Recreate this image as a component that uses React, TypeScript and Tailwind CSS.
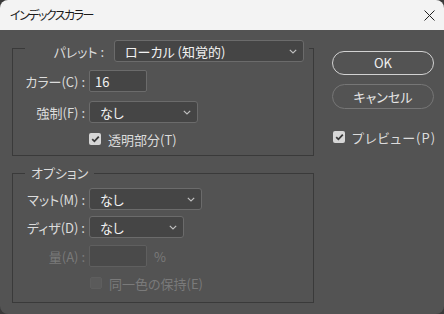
import React from 'react';

const font = "font-['Noto_Sans_CJK_JP','Noto_Sans',sans-serif] [font-feature-settings:'palt']";

function Chevron() {
  return (
    <svg width="8" height="5" viewBox="0 0 8 5" className="shrink-0">
      <path d="M0.8 0.8 L4 4 L7.2 0.8" fill="none" stroke="#bdbdbd" strokeWidth="1.2" />
    </svg>
  );
}

function Select({ value, w }: { value: string; w: string }) {
  return (
    <div className={`${w} h-[22px] flex items-center justify-between pl-[10px] pr-[6px] bg-[#454545] border border-[#6b6b6b] rounded-[3px] text-[13px] text-[#f2f2f2]`}>
      <span className="leading-none">{value}</span>
      <Chevron />
    </div>
  );
}

function Check({ on, disabled }: { on?: boolean; disabled?: boolean }) {
  return (
    <div className={`w-[12px] h-[12px] shrink-0 rounded-[2px] flex items-center justify-center ${disabled ? 'bg-[#5a5a5a] border border-[#5e5e5e]' : 'bg-[#d6d6d6]'}`}>
      {on && (
        <svg width="9" height="8" viewBox="0 0 9 8">
          <path d="M1.2 4.2 L3.4 6.3 L7.8 1.6" fill="none" stroke="#3a3a3a" strokeWidth="1.8" />
        </svg>
      )}
    </div>
  );
}

function Label({ text, dim }: { text: string; dim?: boolean }) {
  return (
    <span className={`w-[72px] text-right text-[13px] leading-none ${dim ? 'text-[#7a7a7a]' : 'text-[#dcdcdc]'}`}>{text}</span>
  );
}

export default function App() {
  return (
    <div className={`w-[444px] h-[314px] bg-[#3a3a3a] ${font}`}>
      <div className="w-full h-full rounded-[8px] overflow-hidden flex flex-col">
        <div className="h-[30px] bg-[#f3f3f3] flex items-center justify-between pl-[10px] pr-[9px] shrink-0">
          <span className="text-[12px] tracking-[-1.5px] text-[#1b1b1b]">インデックスカラー</span>
          <svg width="11" height="11" viewBox="0 0 11 11">
            <path d="M0.5 0.5 L10.5 10.5 M10.5 0.5 L0.5 10.5" stroke="#222" strokeWidth="1" />
          </svg>
        </div>
        <div className="flex-1 bg-[#535353] flex pt-[4px] pl-[12px]">
          <div className="w-[302px] flex flex-col">
            <fieldset className="border border-[#3a3a3a] pb-[8px]">
              <legend className="ml-[12px] pt-[6px] pr-[5px]">
                <div className="flex items-center">
                  <span className="w-[79px] text-right text-[13px] leading-none text-[#dcdcdc]">パレット :</span>
                  <div className="ml-[10px]"><Select value="ローカル (知覚的)" w="w-[190px]" /></div>
                </div>
              </legend>
              <div className="flex items-center mt-[8px]">
                <Label text="カラー(C) :" />
                <div className="ml-[4px] w-[58px] h-[22px] bg-[#454545] border border-[#6b6b6b] rounded-[2px] flex items-center pl-[5px] text-[13px] text-[#f2f2f2] leading-none">16</div>
              </div>
              <div className="flex items-center mt-[9px]">
                <Label text="強制(F) :" />
                <div className="ml-[4px]"><Select value="なし" w="w-[109px]" /></div>
              </div>
              <div className="flex items-center mt-[8px] h-[16px] pl-[76px]">
                <Check on />
                <span className="ml-[7px] text-[13px] leading-none text-[#dcdcdc]">透明部分(T)</span>
              </div>
            </fieldset>
            <fieldset className="border border-[#3a3a3a] mt-[9px] pb-[11px]">
              <legend className="ml-[12px] px-[6px] text-[13px] leading-[16px] text-[#dcdcdc]">オプション</legend>
              <div className="flex items-center mt-[7px]">
                <Label text="マット(M) :" />
                <div className="ml-[4px]"><Select value="なし" w="w-[113px]" /></div>
              </div>
              <div className="flex items-center mt-[6px]">
                <Label text="ディザ(D) :" />
                <div className="ml-[4px]"><Select value="なし" w="w-[95px]" /></div>
              </div>
              <div className="flex items-center mt-[7px]">
                <Label text="量(A) :" dim />
                <div className="ml-[4px] w-[58px] h-[22px] bg-[#4a4a4a] border border-[#5f5f5f] rounded-[2px]" />
                <span className="ml-[7px] text-[13px] leading-none text-[#7a7a7a]">%</span>
              </div>
              <div className="flex items-center mt-[8px] h-[16px] pl-[77px]">
                <Check disabled />
                <span className="ml-[7px] text-[13px] leading-none text-[#7a7a7a]">同一色の保持(E)</span>
              </div>
            </fieldset>
          </div>
          <div className="ml-[18px] w-[102px] flex flex-col pt-[17px]">
            <div className="h-[24px] rounded-full border-[1.5px] border-[#d2d2d2] flex items-center justify-center text-[13px] text-[#f0f0f0]">OK</div>
            <div className="mt-[9px] h-[25px] rounded-full border border-[#767676] flex items-center justify-center text-[13px] text-[#e6e6e6]">キャンセル</div>
            <div className="mt-[22px] flex items-center h-[12px] pl-[1px]">
              <Check on />
              <span className="ml-[7px] text-[13px] tracking-[1px] whitespace-nowrap leading-none text-[#dcdcdc]">プレビュー(P)</span>
            </div>
          </div>
        </div>
      </div>
    </div>
  );
}
